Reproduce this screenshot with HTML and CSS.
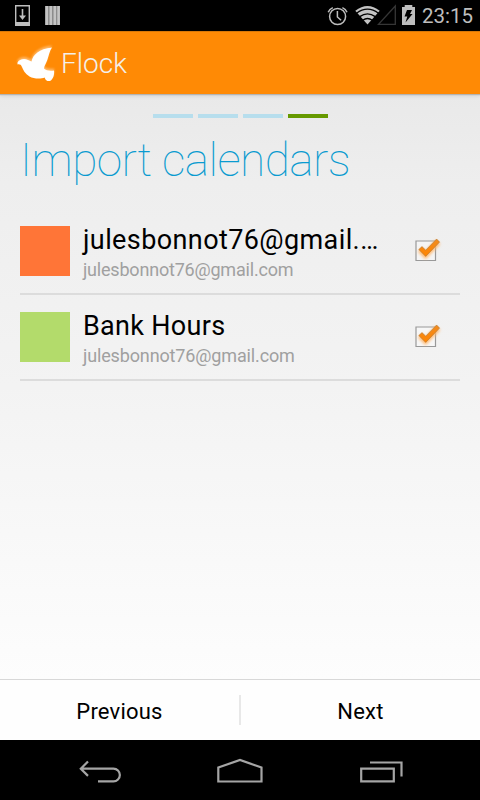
FILE: index.html
```
<!DOCTYPE html>
<html lang="en">
<head>
<meta charset="utf-8">
<title>Flock</title>
<link rel="stylesheet" href="styles.css">
</head>
<body>
<div class="screen">
  <header class="status">
    <svg class="status-left" width="64" height="31" viewBox="0 0 64 31">
      <path d="M15.7 5.7h13.6v19.6H15.7z" fill="none" stroke="#bebebe" stroke-width="1.4"/>
      <path d="M16 22h13v3H16z" fill="#bebebe"/>
      <path d="M22.5 9v8" stroke="#bebebe" stroke-width="1.6"/>
      <path d="M19 15.5h7l-3.5 4.5z" fill="#bebebe"/>
      <path d="M45 6h15v19H45z" fill="#888"/>
      <path d="M46.8 6v19M50.8 6v19M54.8 6v19M58.6 6v19" stroke="#c4c4c4" stroke-width="2.6"/>
    </svg>
    <svg class="status-right" width="96" height="31" viewBox="324 0 96 31">
      <g fill="none" stroke="#bebebe" stroke-width="1.5">
        <circle cx="337.6" cy="16.5" r="8"/>
        <path d="M337.4 11v6l3.7 3.3"/>
        <path d="M328.2 12.3q1.200-3.300 4.600-4.700M347 12.300q-1.200-3.300-4.600-4.700"/>
      </g>
      <path d="M355.300 10.800Q367.500 1.300 379.700 10.800L367.500 24.500z" fill="#c4c4c4"/>
      <path d="M356.500 13.200q11-8 22 0M359.700 16.600q7.800-5.600 15.600 0M362.700 20.200q4.800-3.400 9.600 0" fill="none" stroke="#000" stroke-width="1.300"/>
      <path d="M395.300 6v18.400h-16.800z" fill="none" stroke="#363636" stroke-width="1.300"/>
      <path d="M402 7h2.700V5h7.600v2h2.700v18h-13z" fill="#bebebe"/>
      <path d="M407 10h5l-2 4h2.500l-7 8.500 1.800-6h-2.800z" fill="#000"/>
    </svg>
    <span class="clock">23:15</span>
  </header>
  <div class="appbar">
    <svg class="bird" width="44" height="44" viewBox="14 41 44 44">
      <defs><filter id="soft" x="-20%" y="-20%" width="140%" height="140%"><feGaussianBlur stdDeviation="0.8"/></filter></defs>
      <path id="dove" d="M17.500 62.500C19 59.500 24 58 28 60L31.500 61.500C33 54.500 39 49 52 47.500C49.500 51 48.800 56 47.300 60C46 63.500 44.200 66 44 68.500C46 70.500 50 71.200 54 70.500C54.500 74.500 53.500 79 50 81C47.500 81.500 45.500 80.500 44.700 77.500C41 79 34 79 29.500 76.500C25 73.500 23.500 70.500 22 67C21 64.500 19.500 64 17.500 64.500Z" fill="#fff"/>
      <use href="#dove" y="-2" opacity=".4" filter="url(#soft)"/>
    </svg>
    <h1 class="app-name">Flock</h1>
  </div>
  <main class="content">
    <div class="steps"><i class="step"></i><i class="step"></i><i class="step"></i><i class="step current"></i></div>
    <h2 class="title">Import calendars</h2>
    <ul class="list">
      <li class="row">
        <span class="swatch orange"></span>
        <div class="texts"><div class="name long">julesbonnot76@gmail.…</div><div class="account">julesbonnot76@gmail.com</div></div>
        <svg class="check" width="36" height="36" viewBox="0 0 36 36">
          <defs>
            <filter id="glow" x="-40%" y="-40%" width="180%" height="180%"><feGaussianBlur stdDeviation="1.800"/></filter>
            <linearGradient id="tick" x1="0" y1="0" x2="0" y2="1"><stop offset="0" stop-color="#f08c22"/><stop offset="1" stop-color="#ff8400"/></linearGradient>
          </defs>
          <path d="M6 8h19.500v19.500h-19.500z" fill="#f5f5f5" stroke="#999" stroke-width="1.200"/>
          <path d="M10 16.500l5.500 5.500L28 9" fill="none" stroke="#ffb870" stroke-width="6" filter="url(#glow)"/>
          <path d="M8.800 16.500l3.200-2.900 3.700 3.600L26.600 6l3 3.100L15.700 23.400z" fill="url(#tick)" stroke="#b07838" stroke-width=".6"/>
        </svg>
      </li>
      <li class="row">
        <span class="swatch green"></span>
        <div class="texts"><div class="name">Bank Hours</div><div class="account wide">julesbonnot76@gmail.com</div></div>
        <svg class="check" width="36" height="36" viewBox="0 0 36 36">
          <path d="M6 8h19.500v19.500h-19.500z" fill="#f7f7f7" stroke="#999" stroke-width="1.200"/>
          <path d="M10 16.500l5.500 5.500L28 9" fill="none" stroke="#ffb870" stroke-width="6" filter="url(#glow)"/>
          <path d="M8.800 16.500l3.200-2.900 3.700 3.600L26.600 6l3 3.100L15.700 23.400z" fill="url(#tick)" stroke="#b07838" stroke-width=".6"/>
        </svg>
      </li>
    </ul>
  </main>
  <footer class="actions">
    <button class="action">Previous</button>
    <span class="divider"></span>
    <button class="action">Next</button>
  </footer>
  <nav class="navbar">
    <svg width="480" height="60" viewBox="0 740 480 60" fill="none" stroke="#a5a5a5" stroke-width="2.200">
      <path d="M80.500 768.700H113.500a6.300 6.300 0 0 1 0 12.700H98M88 761.500l-7.200 7.200 7.200 7.200"/>
      <path d="M218.300 781.500V767.500L240 760l21.500 7.500v14z"/>
      <path d="M361.200 768.700h32.600v12.700h-32.600zM370 762.500h31.500V776.500"/>
    </svg>
  </nav>
</div>
</body>
</html>
```
FILE: styles.css
```
* { box-sizing: border-box; }
body { margin: 0; font-family: Roboto, sans-serif; }
.screen {
  width: 480px; height: 800px; overflow: hidden;
  display: flex; flex-direction: column;
  background: #000;
}
.status { height: 31px; display: flex; flex: none; background: #000; }
.status-right { margin-left: auto; }
.clock {
  width: 60px; padding-left: 2px;
  font-size: 20.500px; line-height: 32px; color: #bebebe; white-space: nowrap;
}
.appbar {
  height: 63px; flex: none; display: flex; align-items: center;
  padding-left: 14px; background: #ff8a05; border-top: 1px solid #d87808;
  position: relative; z-index: 1;
  box-shadow: 0 1px 1px #b4b4b4, 0 2px 4px rgba(0, 0, 0, .1);
}
.app-name {
  margin: 2px 0 0 3px; font-size: 28px; line-height: 34px; font-weight: 300; color: #f4f0ea;
}
.content {
  flex: 1; padding: 20px 20px 0;
  background: linear-gradient(#e9e9e9, #eeeeee 15%, #f3f3f3 50%, #fdfdfd);
}
.steps { display: flex; justify-content: center; gap: 5px; height: 4px; }
.step { width: 40px; background: #b7deed; }
.step.current { background: #669900; }
.title {
  margin: 14px 0 0; font-size: 46px; line-height: 56px; font-weight: 100;
  letter-spacing: -.55px; color: #0a9bd0; white-space: nowrap;
}
.list { list-style: none; margin: 19px 0 0; padding: 0; }
.row {
  height: 88px; padding-top: 1px; display: flex; align-items: center;
  border-bottom: 2px solid #dcdcdc;
}
.row + .row { height: 86px; padding-top: 0; }
.swatch { width: 50px; height: 50px; flex: none; }
.orange { background: #ff7537; }
.green { background: #b3db6b; }
.texts { flex: 1; padding: 3px 0 0 13px; white-space: nowrap; }
.name { font-size: 27px; line-height: 34px; letter-spacing: .3px; color: #000; }
.long { letter-spacing: .4px; }
.account { font-size: 18px; line-height: 25px; letter-spacing: -.2px; color: #a0a0a0; }
.wide { letter-spacing: -.14px; }
.check { flex: none; margin-right: 14px; }
.actions {
  height: 61px; flex: none; display: flex; align-items: center;
  background: #fefefe; border-top: 1px solid #d8d8d8;
}
.action {
  flex: 1; padding: 3px 0 0; border: 0; background: none;
  font: 22px/30px Roboto, sans-serif; letter-spacing: .2px; color: #000;
}
.divider { width: 2px; height: 30px; background: #e8e8e8; }
.navbar { height: 60px; flex: none; background: #000; }
.navbar svg { display: block; }
```
